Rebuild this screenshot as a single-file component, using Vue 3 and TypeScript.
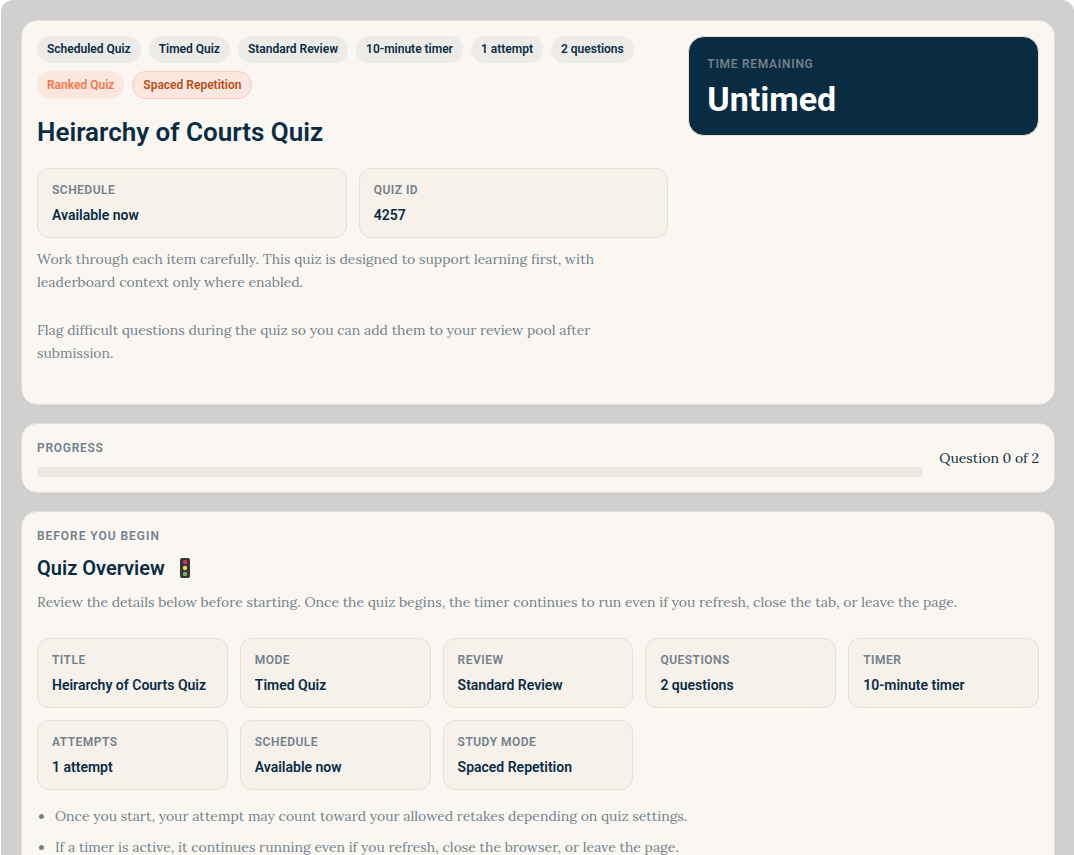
<script setup lang="ts">
interface Chip {
  text: string
  tone: 'neutral' | 'ranked' | 'spaced'
}

interface Detail {
  label: string
  value: string
}

const chips: Chip[] = [
  { text: 'Scheduled Quiz', tone: 'neutral' },
  { text: 'Timed Quiz', tone: 'neutral' },
  { text: 'Standard Review', tone: 'neutral' },
  { text: '10-minute timer', tone: 'neutral' },
  { text: '1 attempt', tone: 'neutral' },
  { text: '2 questions', tone: 'neutral' },
  { text: 'Ranked Quiz', tone: 'ranked' },
  { text: 'Spaced Repetition', tone: 'spaced' },
]

const summary: Detail[] = [
  { label: 'Schedule', value: 'Available now' },
  { label: 'Quiz ID', value: '4257' },
]

const overview: Detail[] = [
  { label: 'Title', value: 'Heirarchy of Courts Quiz' },
  { label: 'Mode', value: 'Timed Quiz' },
  { label: 'Review', value: 'Standard Review' },
  { label: 'Questions', value: '2 questions' },
  { label: 'Timer', value: '10-minute timer' },
  { label: 'Attempts', value: '1 attempt' },
  { label: 'Schedule', value: 'Available now' },
  { label: 'Study mode', value: 'Spaced Repetition' },
]

const notes: string[] = [
  'Once you start, your attempt may count toward your allowed retakes depending on quiz settings.',
  'If a timer is active, it continues running even if you refresh, close the browser, or leave the page.',
]

const current = 0
const total = 2
</script>

<template>
  <main class="shell">
    <section class="card hero">
      <div class="hero-main">
        <ul class="chips">
          <li v-for="chip in chips" :key="chip.text" class="chip" :class="chip.tone">{{ chip.text }}</li>
        </ul>
        <h1 class="title">Heirarchy of Courts Quiz</h1>
        <dl class="details two">
          <div v-for="item in summary" :key="item.label" class="detail">
            <dt>{{ item.label }}</dt>
            <dd>{{ item.value }}</dd>
          </div>
        </dl>
        <div class="intro">
          <p>
            Work through each item carefully. This quiz is designed to support learning first, with
            leaderboard context only where enabled.
          </p>
          <p>
            Flag difficult questions during the quiz so you can add them to your review pool after
            submission.
          </p>
        </div>
      </div>
      <aside class="time">
        <div class="eyebrow">Time remaining</div>
        <div class="time-value">Untimed</div>
      </aside>
    </section>

    <section class="card progress-card">
      <div class="progress-main">
        <label class="eyebrow" for="quiz-progress">Progress</label>
        <progress id="quiz-progress" class="bar" :value="current" :max="total"></progress>
      </div>
      <div class="count">Question {{ current }} of {{ total }}</div>
    </section>

    <section class="card">
      <div class="eyebrow wide">Before you begin</div>
      <h2 class="subtitle">
        Quiz Overview
        <svg class="light" viewBox="0 0 10 20" aria-hidden="true">
          <rect width="10" height="20" rx="2" fill="#31373d" />
          <circle cx="5" cy="4" r="2.2" fill="#dd2e44" />
          <circle cx="5" cy="10" r="2.2" fill="#ffcc4d" />
          <circle cx="5" cy="16" r="2.2" fill="#77b255" />
        </svg>
      </h2>
      <p class="lead">
        Review the details below before starting. Once the quiz begins, the timer continues to run even if
        you refresh, close the tab, or leave the page.
      </p>
      <dl class="details five">
        <div v-for="item in overview" :key="item.label" class="detail">
          <dt>{{ item.label }}</dt>
          <dd>{{ item.value }}</dd>
        </div>
      </dl>
      <ul class="notes">
        <li v-for="note in notes" :key="note">{{ note }}</li>
      </ul>
    </section>
  </main>
</template>

<style>
body {
  margin: 0;
  background: #fff;
}
</style>

<style scoped>
.shell {
  box-sizing: border-box;
  height: 100vh;
  margin-left: 1px;
  padding: 20px 19px 20px 20px;
  overflow-y: auto;
  scrollbar-width: none;
  border-radius: 12px 12px 0 0;
  background: #d0d0d0;
  color: #0a2c42;
  font-family: Roboto, "Liberation Sans", sans-serif;
}

.card {
  margin-bottom: 18px;
  padding: 15px;
  border: 1px solid #e8dfd2;
  border-radius: 16px;
  background: #faf7f2;
  box-shadow: 0 1px 2px rgba(10, 44, 66, 0.03);
}

.hero {
  display: grid;
  grid-template-columns: minmax(0, 9fr) minmax(0, 5fr);
  gap: 20px;
  align-items: start;
}

.chips {
  display: flex;
  flex-wrap: wrap;
  gap: 8px;
  margin: 0;
  padding: 0;
  list-style: none;
}

.chip {
  display: flex;
  align-items: center;
  padding: 6px 10px;
  border-radius: 14px;
  font-size: 12px;
  font-weight: 600;
  line-height: 15px;
}

.neutral {
  background: #ecebe7;
}

.ranked {
  background: #fbe7dd;
  color: #f57650;
}

.spaced {
  padding: 5px 10px;
  border: 1px solid #f8c9b9;
  background: #fbe7e0;
  color: #b94d13;
  line-height: 16px;
}

.title {
  margin: 17px 0 20px;
  font-size: 26px;
  font-weight: 600;
  line-height: 32px;
}

.details {
  display: grid;
  gap: 12px;
  margin: 0;
}

.two {
  grid-template-columns: repeat(2, minmax(0, 1fr));
}

.five {
  grid-template-columns: repeat(5, minmax(0, 1fr));
}

.detail {
  padding: 14px;
  border: 1px solid #e8dfd2;
  border-radius: 12px;
  background: #f6f1eb;
}

.detail dt {
  margin-bottom: 10px;
  color: #73808a;
  font-size: 12px;
  font-weight: 600;
  line-height: 14px;
  letter-spacing: 0.04em;
  text-transform: uppercase;
}

.detail dd {
  margin: 0;
  font-size: 14px;
  font-weight: 600;
  line-height: 16px;
}

.intro,
.lead,
.notes,
.count {
  font-family: Lora, "Liberation Serif", serif;
  font-size: 14px;
}

.intro {
  max-width: 580px;
  padding-top: 10px;
  color: #73808a;
  line-height: 23px;
}

.intro p {
  margin: 0 0 24px;
}

.intro p + p {
  margin-top: 25px;
}

.time {
  padding: 18px;
  border: 1px solid #e8dfd2;
  border-radius: 16px;
  background: #0a2c42;
  color: #fff;
}

.eyebrow {
  display: block;
  color: #73808a;
  font-size: 12px;
  font-weight: 600;
  line-height: 18px;
  letter-spacing: 0.06em;
  text-transform: uppercase;
}

.wide {
  letter-spacing: 0.08em;
}

.time-value {
  margin-top: 8px;
  font-size: 34px;
  font-weight: 700;
  line-height: 36px;
}

.progress-card {
  display: flex;
  align-items: center;
  gap: 16px;
}

.progress-main {
  flex: 1;
}

.bar {
  display: block;
  width: 100%;
  height: 10px;
  margin-top: 10px;
  overflow: hidden;
  border: 0;
  border-radius: 5px;
  appearance: none;
  background: #eee7e0;
}

.bar::-webkit-progress-bar {
  background: #eee7e0;
}

.bar::-webkit-progress-value {
  background: #f57650;
}

.count {
  line-height: 24px;
}

.subtitle {
  display: flex;
  align-items: center;
  gap: 15px;
  margin: 10px 0 9px;
  font-size: 20px;
  font-weight: 600;
  line-height: 26px;
}

.light {
  width: 10px;
  height: 20px;
}

.lead {
  margin: 0 0 24px;
  color: #73808a;
  line-height: 24px;
}

.notes {
  margin: 14px 0 0;
  padding-left: 18px;
  color: #73808a;
  line-height: 24px;
}

.notes li + li {
  margin-top: 7px;
}
</style>
